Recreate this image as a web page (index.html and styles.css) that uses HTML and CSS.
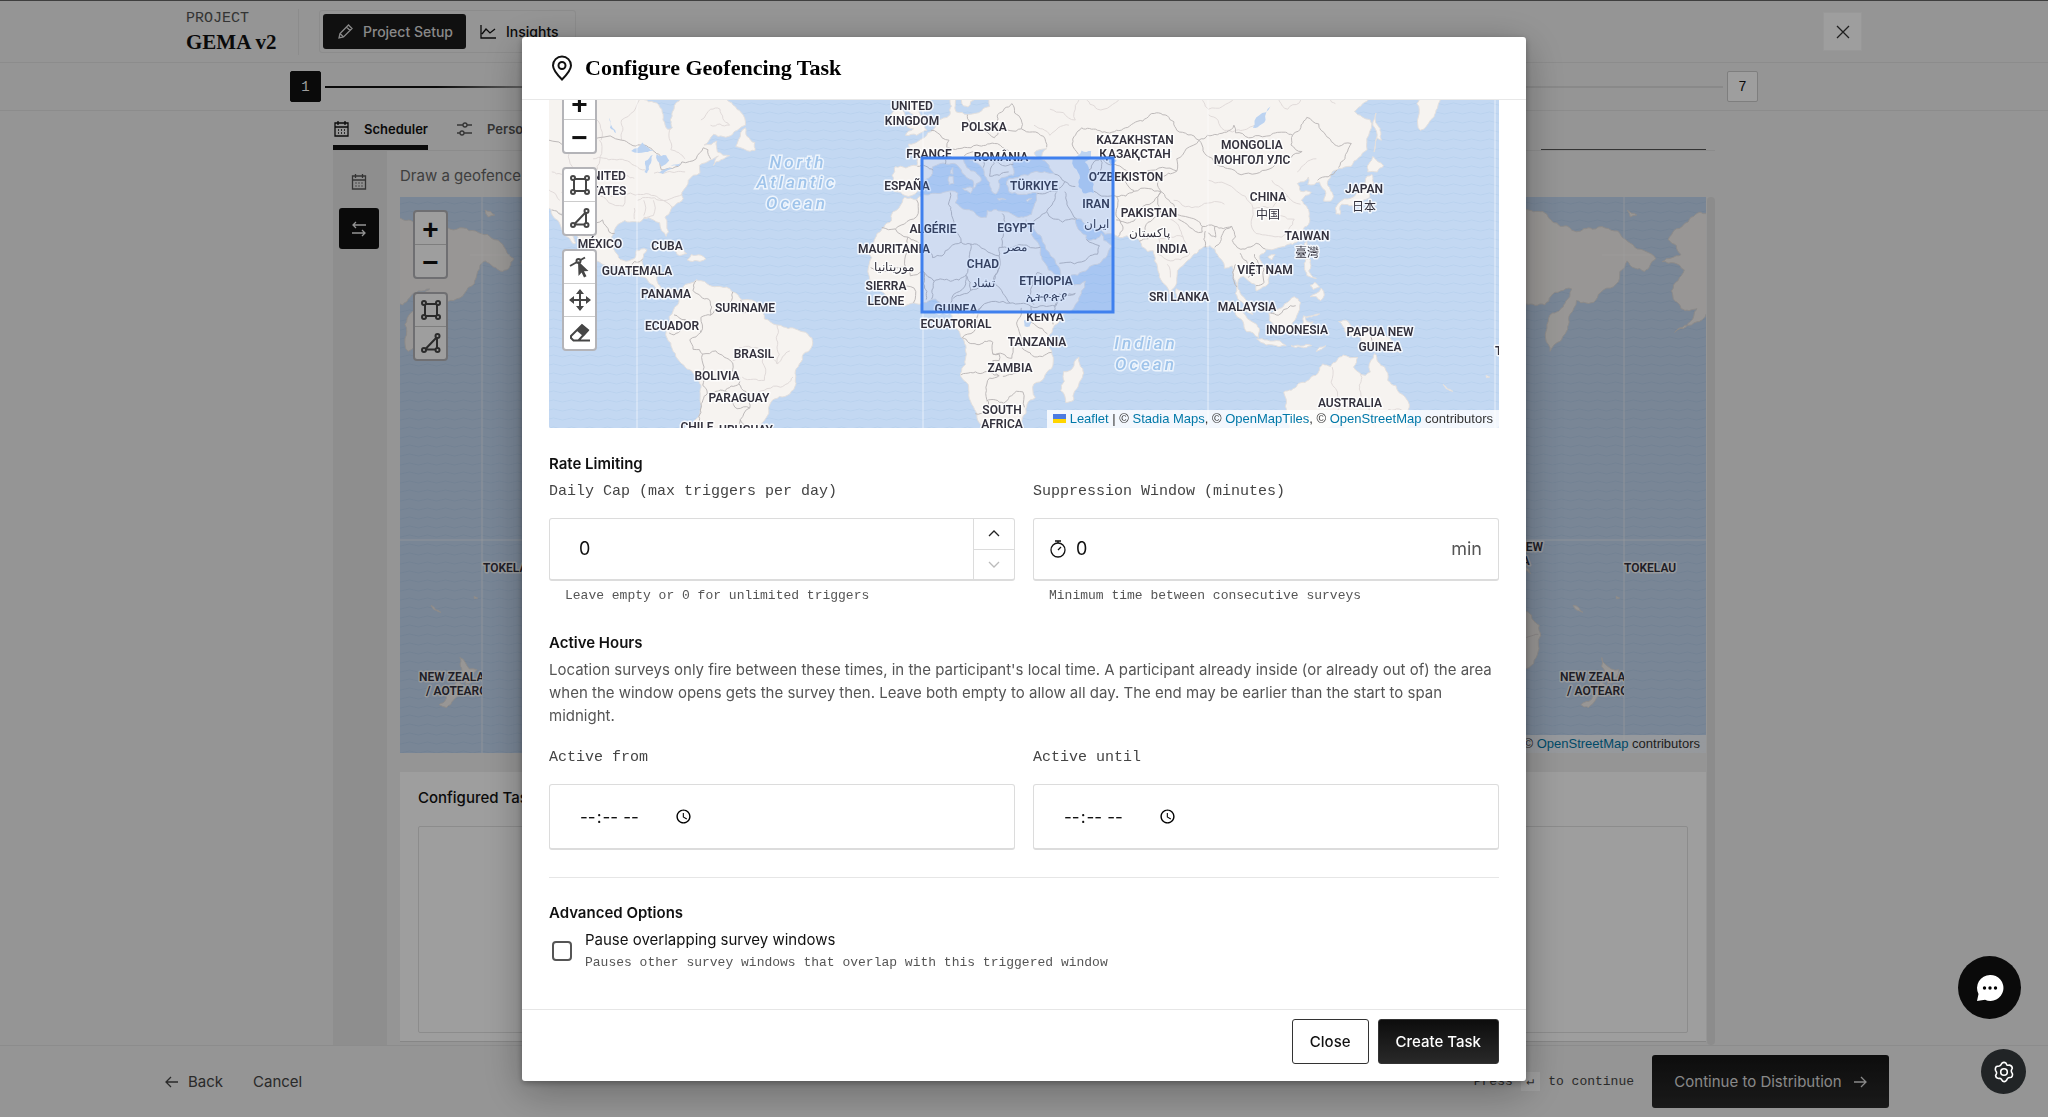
FILE: index.html
```html
<!DOCTYPE html>
<html lang="en">
<head>
<meta charset="utf-8">
<title>GEMA v2 – Project Setup</title>
<link rel="stylesheet" href="styles.css">
</head>
<body>
<div class="app">
  <header class="topbar">
    <div class="project">
      <span class="project-kicker">PROJECT</span>
      <span class="project-name">GEMA v2</span>
    </div>
    <nav class="switch">
      <button class="switch-item is-active" type="button">
        <svg class="icon" width="18" height="18" viewBox="0 0 18 18"><path d="M3 15l1-4.500L12.500 2l3.500 3.500L7.500 14zM10.500 4l3.500 3.500M4 10.500l3.500 3.500"/></svg>
        Project Setup
      </button>
      <button class="switch-item" type="button">
        <svg class="icon" width="18" height="18" viewBox="0 0 18 18"><path d="M2 2v13h15M3 11l4-5 4 4 5-4"/></svg>
        Insights
      </button>
    </nav>
    <button class="icon-button" type="button" aria-label="Exit"><svg class="icon" width="14" height="14" viewBox="0 0 14 14"><path d="M1 1l12 12M13 1L1 13"/></svg></button>
  </header>
  <div class="steps">
    <span class="step is-active">1</span>
    <span class="step-line"></span>
    <span class="step">7</span>
  </div>
  <main class="workspace">
    <nav class="tabs">
      <a class="tab is-active" href="#scheduler"><svg class="icon" width="17" height="18" viewBox="0 0 17 18"><path d="M2 3h13v13H2zM2 7h13M5 1v4M12 1v4M5 10h1M8 10h1M11 10h1M5 13h1M8 13h1M11 13h1"/></svg>Scheduler</a>
      <a class="tab" href="#personalize"><svg class="icon" width="17" height="18" viewBox="0 0 17 18"><path d="M1 5h6M11 5h5M1 13h3M8 13h8"/><circle cx="9" cy="5" r="2"/><circle cx="6" cy="13" r="2"/></svg>Personalization</a>
      <span class="tab-rule"></span>
    </nav>
    <div class="panes">
      <aside class="rail">
        <button class="rail-item" type="button" aria-label="Calendar"><svg class="icon" width="18" height="18" viewBox="0 0 17 18"><path d="M2 3h13v13H2zM2 7h13M5 1v4M12 1v4M5 10h1M8 10h1M11 10h1M5 13h1M8 13h1M11 13h1"/></svg></button>
        <button class="rail-item is-active" type="button" aria-label="Triggers"><svg class="icon" width="16" height="16" viewBox="0 0 16 16"><path d="M15 4H2M5 1L2 4l3 3M1 12h13M11 9l3 3-3 3"/></svg></button>
      </aside>
      <section class="geofence">
        <p class="helper">Draw a geofence on the map</p>
        <div class="map map-page">
          <svg class="map-canvas" viewBox="400 197 1306 556" preserveAspectRatio="xMidYMid slice" data-lon0="1053" data-equator="540">
            <rect x="0" y="0" width="2400" height="1200" class="sea"/>
            <rect x="0" y="0" width="2400" height="1200" fill="url(#waves)"/>
            <g class="land-layer"></g>
            <path class="seam" d="M482 197V753M1624 197V753M400 540H1706M1602 255H1650M470 255H510"/>
            <g class="labels start">
              <text x="483" y="572">TOKELAU</text><text x="1624" y="572">TOKELAU</text>
              <svg x="400" y="660" width="82" height="50" viewBox="0 0 82 50"><text x="19" y="21">NEW ZEALAND</text><text x="26" y="35">/ AOTEAROA</text></svg>
              <svg x="1541" y="660" width="83" height="50" viewBox="0 0 83 50"><text x="19" y="21">NEW ZEALAND</text><text x="26" y="35">/ AOTEAROA</text></svg>
              <text x="1476" y="551">PAPUA NEW</text><text x="1487" y="565">GUINEA</text>
            </g>
          </svg>
          <div class="map-tools">
            <div class="tool-group">
              <button type="button" class="tool zoom">+</button>
              <button type="button" class="tool zoom">−</button>
            </div>
            <div class="tool-group">
              <button type="button" class="tool" aria-label="Draw rectangle"><svg width="22" height="22"><use href="#i-rect"/></svg></button>
              <button type="button" class="tool" aria-label="Draw polygon"><svg width="22" height="22"><use href="#i-poly"/></svg></button>
            </div>
          </div>
          <p class="attribution">© <a href="#osm">OpenStreetMap</a> contributors</p>
        </div>
        <div class="configured">
          <h2>Configured Tasks</h2>
          <div class="configured-list"></div>
        </div>
      </section>
      <div class="scroll-track"></div>
    </div>
  </main>
  <footer class="bottombar">
    <button class="plain" type="button"><svg class="icon" width="14" height="14" viewBox="0 0 14 14"><path d="M13 7H1M6 2L1 7l5 5"/></svg>Back</button>
    <button class="plain" type="button">Cancel</button>
    <p class="press">Press <kbd>↵</kbd> to continue</p>
    <button class="continue" type="button">Continue to Distribution<svg class="icon" width="14" height="14" viewBox="0 0 14 14"><path d="M1 7h12M8 2l5 5-5 5"/></svg></button>
  </footer>
</div>

<div class="overlay">
  <div class="modal" role="dialog" aria-labelledby="modal-title">
    <div class="modal-head">
      <svg class="pin" width="24" height="26" viewBox="0 0 24 26"><path d="M12 24.500C7 19.500 3 15 3 10.500a9 9 0 0 1 18 0C21 15 17 19.500 12 24.500z"/><circle cx="12" cy="10.500" r="3.500"/></svg>
      <h1 id="modal-title">Configure Geofencing Task</h1>
    </div>
    <div class="modal-body">
      <div class="map map-modal">
        <svg class="map-canvas" viewBox="549 72 950 356" preserveAspectRatio="xMidYMid slice" data-lon0="923" data-equator="319">
          <defs>
            <pattern id="waves" width="36" height="9" patternUnits="userSpaceOnUse"><path class="wave" d="M0 5q4.500 2 9 0t9 0 9 0 9 0"/></pattern>
            <g id="i-rect" class="glyph"><path d="M5 5h12v12H5z"/><circle cx="4" cy="4" r="2"/><circle cx="18" cy="4" r="2"/><circle cx="4" cy="18" r="2"/><circle cx="18" cy="18" r="2"/></g>
            <g id="i-poly" class="glyph"><path d="M5 17.500L17 5v12.500z"/><circle cx="17.500" cy="4" r="2"/><circle cx="4" cy="18" r="2"/><circle cx="17.500" cy="18" r="2"/></g>
            <g id="i-edit" class="glyph"><path d="M1 10L16 1.500"/><circle cx="9.500" cy="5" r="2"/><path class="solid" d="M9 5l10.500 10-4.500.300 2.500 5-2.500 1.200-2.400-5L9.500 20z"/></g>
            <g id="i-move" class="glyph"><path d="M11 3v16M3 11h16"/><path class="solid" d="M11 0l4 5H7zM11 22l4-5H7zM0 11l5-4v8zM22 11l-5-4v8z"/></g>
            <g id="i-erase" class="glyph"><path d="M2 14L13 3l6 5-9.500 10.500h-5L2 16zM9 18.500h12"/><path class="solid" d="M13 2.500l7 6-5.500 6-7-6z"/></g>
          </defs>
          <rect x="0" y="0" width="2400" height="1200" class="sea"/>
          <rect x="0" y="0" width="2400" height="1200" fill="url(#waves)"/>
          <g class="land-layer"></g>
          <path class="seam" d="M637 72V428M923 72V428M1208 72V428M1495 72V428"/>
          <g class="ocean">
            <text x="798" y="168">North</text><text x="797" y="188">Atlantic</text><text x="797" y="209">Ocean</text>
            <text x="1146" y="349">Indian</text><text x="1146" y="370">Ocean</text>
          </g>
          <g class="labels">
            <text x="605" y="180">UNITED</text><text x="605" y="195">STATES</text>
            <text x="600" y="248">MÉXICO</text><text x="667" y="250">CUBA</text><text x="637" y="275">GUATEMALA</text><text x="666" y="298">PANAMA</text>
            <text x="745" y="312">SURINAME</text><text x="672" y="330">ECUADOR</text><text x="754" y="358">BRASIL</text><text x="717" y="380">BOLIVIA</text><text x="739" y="402">PARAGUAY</text><text x="697" y="431">CHILE</text><text x="746" y="434">URUGUAY</text>
            <text x="912" y="110">UNITED</text><text x="912" y="125">KINGDOM</text><text x="984" y="131">POLSKA</text><text x="929" y="158">FRANCE</text><text x="1001" y="161">ROMÂNIA</text><text x="907" y="190">ESPAÑA</text><text x="1034" y="190">TÜRKIYE</text>
            <text x="933" y="233">ALGÉRIE</text><text x="1016" y="232">EGYPT</text><text class="local" x="1015" y="251">مصر</text><text x="894" y="253">MAURITANIA</text><text class="local" x="894" y="271">موريتانيا</text><text x="983" y="268">CHAD</text><text class="local" x="983" y="287">تشاد</text>
            <text x="886" y="290">SIERRA</text><text x="886" y="305">LEONE</text><text x="956" y="313">GUINEA</text><text x="956" y="328">ECUATORIAL</text><text x="1046" y="285">ETHIOPIA</text><text class="local" x="1046" y="301">ኢትዮጵያ</text><text x="1045" y="321">KENYA</text><text x="1037" y="346">TANZANIA</text><text x="1010" y="372">ZAMBIA</text><text x="1002" y="414">SOUTH</text><text x="1002" y="428">AFRICA</text>
            <text x="1135" y="144">KAZAKHSTAN</text><text x="1135" y="158">ҚАЗАҚСТАН</text><text x="1126" y="181">OʻZBEKISTON</text><text x="1096" y="208">IRAN</text><text class="local" x="1096" y="228">ایران</text><text x="1149" y="217">PAKISTAN</text><text class="local" x="1149" y="237">پاکستان</text><text x="1172" y="253">INDIA</text>
            <text x="1252" y="149">MONGOLIA</text><text x="1252" y="164">МОНГОЛ УЛС</text><text x="1268" y="201">CHINA</text><text class="local" x="1268" y="219">中国</text><text x="1364" y="193">JAPAN</text><text class="local" x="1364" y="211">日本</text><text x="1307" y="240">TAIWAN</text><text class="local" x="1307" y="257">臺灣</text>
            <text x="1265" y="274">VIỆT NAM</text><text x="1179" y="301">SRI LANKA</text><text x="1247" y="311">MALAYSIA</text><text x="1297" y="334">INDONESIA</text><text x="1380" y="336">PAPUA NEW</text><text x="1380" y="351">GUINEA</text><text x="1350" y="407">AUSTRALIA</text><text x="1521" y="355">TOKELAU</text>
          </g>
          <rect class="fence" x="922" y="158" width="191" height="154"/>
        </svg>
        <div class="map-tools">
          <div class="tool-group">
            <button type="button" class="tool zoom">+</button>
            <button type="button" class="tool zoom">−</button>
          </div>
          <div class="tool-group">
            <button type="button" class="tool" aria-label="Draw rectangle"><svg width="22" height="22"><use href="#i-rect"/></svg></button>
            <button type="button" class="tool" aria-label="Draw polygon"><svg width="22" height="22"><use href="#i-poly"/></svg></button>
          </div>
          <div class="tool-group">
            <button type="button" class="tool" aria-label="Edit layers"><svg width="22" height="22"><use href="#i-edit"/></svg></button>
            <button type="button" class="tool" aria-label="Drag layers"><svg width="22" height="22"><use href="#i-move"/></svg></button>
            <button type="button" class="tool" aria-label="Remove layers"><svg width="22" height="22"><use href="#i-erase"/></svg></button>
          </div>
        </div>
        <p class="attribution"><svg class="flag" width="13" height="9" viewBox="0 0 13 9"><path fill="#4c7be1" d="M0 0h13v5H0z"/><path fill="#ffd500" d="M0 5h13v4H0z"/></svg> <a href="#leaflet">Leaflet</a> | © <a href="#stadia">Stadia Maps</a>, © <a href="#omt">OpenMapTiles</a>, © <a href="#osm">OpenStreetMap</a> contributors</p>
      </div>

      <h2 class="section-title">Rate Limiting</h2>
      <div class="columns">
        <div class="field">
          <label for="cap">Daily Cap (max triggers per day)</label>
          <div class="control">
            <input id="cap" class="number indented" type="number" value="0">
            <div class="stepper">
              <button type="button" aria-label="Increase"><svg class="icon" width="12" height="7" viewBox="0 0 12 7"><path d="M1 6l5-5 5 5"/></svg></button>
              <button type="button" aria-label="Decrease" disabled><svg class="icon" width="12" height="7" viewBox="0 0 12 7"><path d="M1 1l5 5 5-5"/></svg></button>
            </div>
          </div>
          <p class="hint">Leave empty or 0 for unlimited triggers</p>
        </div>
        <div class="field">
          <label for="window">Suppression Window (minutes)</label>
          <div class="control">
            <svg class="icon stopwatch" width="18" height="18" viewBox="0 0 18 18"><circle cx="9" cy="10" r="7"/><path d="M6 1h6M9 10l3-3M9 1v2"/></svg>
            <input id="window" class="number" type="number" value="0">
            <span class="unit">min</span>
          </div>
          <p class="hint">Minimum time between consecutive surveys</p>
        </div>
      </div>

      <h2 class="section-title spaced">Active Hours</h2>
      <p class="description">Location surveys only fire between these times, in the participant's local time. A participant already inside (or already out of) the area when the window opens gets the survey then. Leave both empty to allow all day. The end may be earlier than the start to span midnight.</p>
      <div class="columns hours">
        <div class="field">
          <label for="from">Active from</label>
          <div class="control tall"><input id="from" class="time" type="time"></div>
        </div>
        <div class="field">
          <label for="until">Active until</label>
          <div class="control tall"><input id="until" class="time" type="time"></div>
        </div>
      </div>

      <div class="advanced">
        <h2 class="section-title">Advanced Options</h2>
        <div class="check-row">
          <input id="pause" type="checkbox">
          <div>
            <label for="pause">Pause overlapping survey windows</label>
            <p class="hint">Pauses other survey windows that overlap with this triggered window</p>
          </div>
        </div>
      </div>
    </div>
    <div class="modal-foot">
      <button class="button" type="button">Close</button>
      <button class="button primary" type="button">Create Task</button>
    </div>
  </div>
</div>

<button class="chat" type="button" aria-label="Open chat"><svg width="28" height="28" viewBox="0 0 28 28"><path fill="#fff" d="M14 1a13 13 0 1 1-5 24.800L1 27l1.500-7A13 13 0 0 1 14 1z"/><circle cx="8.500" cy="14" r="1.700"/><circle cx="14" cy="14" r="1.700"/><circle cx="19.500" cy="14" r="1.700"/></svg></button>
<button class="gear" type="button" aria-label="Settings"><svg width="22" height="22" viewBox="0 0 22 22"><path d="M9 2.200Q11 .6 13 2.200L13.900 4Q14.800 4.500 16.500 4.100Q19 4.500 19.300 7.200L18.400 9.300Q18 11 19.300 12.500Q20 14.800 18.300 16.300L15.500 16.800Q14.300 17.200 13.700 19Q12 21.500 9.500 20L8.200 18Q7.300 17.200 5.500 17.500Q3 17.200 2.600 14.700L3.500 12.500Q3.900 11 2.600 9.500Q1.800 7.200 3.500 5.400L6.300 5Q7.800 4.600 9 2.200z"/><circle cx="11" cy="11" r="3.300"/></svg></button>
<script src="map.js"></script>
</body>
</html>
```
FILE: styles.css
```css
* { box-sizing: border-box; }
body { margin: 0; font-family: Inter, "Liberation Sans", sans-serif; font-size: 16px; line-height: 20px; color: #111; background: #f0f0f0; }
button { font: inherit; color: inherit; border: 0; padding: 0; background: none; display: flex; align-items: center; justify-content: center; }
a { color: inherit; text-decoration: none; }
p, h1, h2 { margin: 0; }
.icon { fill: none; stroke: currentColor; stroke-width: 1.300; flex: none; }

/* page behind the dialog */
.app { height: 100vh; display: flex; flex-direction: column; overflow: hidden; border-top: 1px solid #666; }
.topbar { height: 62px; padding: 0 186px; display: flex; align-items: center; border-bottom: 1px solid #e2e2e2; flex: none; }
.project { display: flex; flex-direction: column; gap: 2px; width: 113px; height: 46px; border-right: 1px solid #e2e2e2; justify-content: center; }
.project-kicker { font: 15px/18px "Liberation Mono", monospace; color: #555; }
.project-name { font: bold 21px/24px "Liberation Serif", serif; white-space: nowrap; }
.switch { display: flex; margin-left: 20px; padding: 3px; border: 1px solid #e2e2e2; border-radius: 3px; font-size: 14px; }
.switch-item { height: 35px; padding: 0 13px; gap: 9px; border-radius: 3px; font-weight: 500; white-space: nowrap; }
.switch-item.is-active { background: #1a1a1a; color: #ddd; }
.icon-button { margin-left: auto; width: 39px; height: 39px; background: #fff; border: 1px solid #f6f6f6; color: #333; }
.steps { height: 48px; padding: 0 290px; display: flex; align-items: center; gap: 4px; border-bottom: 1px solid #e2e2e2; flex: none; font: 14px/20px "Liberation Mono", monospace; }
.step { width: 31px; height: 31px; display: flex; align-items: center; justify-content: center; background: #fff; border: 1px solid #ccc; border-radius: 2px; }
.step.is-active { background: #111; color: #fff; border-color: #111; }
.step-line { flex: 1; height: 2px; background: linear-gradient(90deg, #111 8%, #ddd 17%); }
.workspace { flex: 1; min-height: 0; width: 100%; max-width: 1382px; margin: 0 auto; display: flex; flex-direction: column; }
.tabs { height: 40px; display: flex; gap: 28px; border-bottom: 1px solid #e2e2e2; flex: none; font-size: 13px; font-weight: 600; }
.tab { display: flex; align-items: center; gap: 14px; color: #555; border-bottom: 5px solid transparent; padding-top: 2px; }
.tab.is-active { color: #111; border-bottom-color: #111; border-radius: 4px 4px 0 0; }
.tab-rule { margin-left: auto; align-self: flex-end; width: 165px; height: 1px; margin-right: 9px; background: #555; }
.panes { flex: 1; min-height: 0; display: flex; overflow: hidden; }
.rail { width: 54px; flex: none; background: #e5e5e5; padding: 10px 8px 0 6px; display: flex; flex-direction: column; gap: 6px; }
.rail-item { width: 40px; height: 41px; border-radius: 3px; color: #555; }
.rail-item.is-active { background: #111; color: #eee; }
.geofence { flex: 1; min-width: 0; margin-left: 13px; display: flex; flex-direction: column; }
.helper { padding: 15px 0 11px; font-size: 15px; color: #666; }
.configured { margin-top: 19px; background: #fff; padding: 16px 18px; height: 270px; border-bottom: 1px solid #d8d8d8; }
.configured h2 { font-size: 15px; line-height: 20px; font-weight: 500; }
.configured-list { margin-top: 18px; height: 207px; border: 1px solid #e2e2e2; border-radius: 2px; }
.scroll-track { width: 9px; margin-top: 46px; border-left: 1px solid #f0f0f0; background: #e3e3e3; border-radius: 4px; }
.bottombar { height: 72px; flex: none; padding: 0 159px 0 165px; display: flex; align-items: center; gap: 30px; border-top: 1px solid #e2e2e2; color: #444; font-size: 15px; }
.plain { gap: 9px; }
.press { margin-left: auto; font: 13px/22px "Liberation Mono", monospace; }
.press kbd { font: inherit; background: #fff; padding: 2px 6px; }
.continue { margin-left: -12px; height: 53px; width: 237px; flex: none; gap: 11px; background: linear-gradient(#161616, #2a2a2a); color: #ddd; border-radius: 3px; }

/* maps */
.map { position: relative; flex: none; overflow: hidden; background: #c3d7f2; }
.map-page { height: 556px; }
.map-modal { height: 356px; border-radius: 2px; }
.map-canvas { position: absolute; inset: 0; width: 100%; height: 100%; display: block; }
.sea { fill: #c3d8f2; }
.wave { fill: none; stroke: #b2cbe9; stroke-width: 1; opacity: .5; }
.land { fill: #f6f3f0; stroke: #e3dfdd; stroke-width: 1; stroke-linejoin: round; }
.lake { fill: #bcd3f1; }
.border { fill: none; stroke: #bdb9b9; stroke-width: 1; stroke-linejoin: round; }
.region { fill: none; stroke: #e0dad9; stroke-width: 1; }
.seam { fill: none; stroke: #fff; opacity: .6; stroke-width: 1; }
.labels { font: 600 12px Roboto, "Noto Sans", "Noto Sans CJK SC", sans-serif; text-anchor: middle; fill: #33313d; stroke: #fff; stroke-opacity: .8; stroke-width: 3px; paint-order: stroke; stroke-linejoin: round; }
.labels.start { text-anchor: start; }
.labels .local { font-weight: 400; }
.ocean { font: italic 500 17px Roboto, sans-serif; letter-spacing: 3px; text-anchor: middle; fill: #9ec3ea; stroke: #edf4fc; stroke-width: 3px; paint-order: stroke; }
.fence { fill: #3b82f6; fill-opacity: .2; stroke: #3f80ee; stroke-width: 3; }
.map-tools { position: absolute; left: 13px; top: 13px; display: flex; flex-direction: column; gap: 13px; }
.tool-group { width: 35px; border: 2px solid #b4b4b8; border-radius: 4px; overflow: hidden; background: #fff; }
.tool { width: 31px; height: 33px; border-bottom: 1px solid #ccc; }
.tool:last-child { height: 32px; border-bottom: 0; }
.zoom { font: bold 28px/30px "Liberation Sans", sans-serif; padding-top: 4px; }
.glyph { fill: #fff; stroke: #464646; stroke-width: 2; }
.glyph .solid { fill: #464646; stroke: none; }
.attribution { position: absolute; right: 0; bottom: 0; padding: 0 6px; background: #fffc; font: 13px/18px "Liberation Sans", sans-serif; color: #333; white-space: nowrap; }
.attribution a { color: #0078a8; }

/* dialog */
.overlay { position: fixed; inset: 0; padding: 37px 0 36px; background: rgba(0, 0, 0, .38); display: flex; justify-content: center; }
.modal { width: 100%; max-width: 1004px; height: 100%; background: #fff; border-radius: 3px; box-shadow: 0 10px 40px rgba(0, 0, 0, .3), 0 2px 6px rgba(0, 0, 0, .3); display: flex; flex-direction: column; overflow: hidden; }
.modal-head { flex: none; height: 63px; padding: 0 28px; display: flex; align-items: center; gap: 11px; border-bottom: 1px solid #e8e8e8; }
.modal-head h1 { font: bold 22px/26px "Liberation Serif", serif; color: #000; }
.pin { fill: none; stroke: #111; stroke-width: 2; }
.modal-body { flex: 1; min-height: 0; overflow: hidden; padding: 0 27px 38px; display: flex; flex-direction: column; justify-content: flex-end; }
.modal-body > * { flex: none; }
.section-title { font-size: 15px; line-height: 20px; font-weight: 600; margin-top: 26px; }
.section-title.spaced { margin-top: 29px; }
.columns { margin-top: 8px; display: grid; grid-template-columns: 1fr 1fr; gap: 18px; }
.hours { margin-top: 21px; }
.field { display: flex; flex-direction: column; }
.field label { font: 15px/20px "Liberation Mono", monospace; color: #444; }
.control { margin-top: 16px; height: 63px; display: flex; align-items: center; border: 1px solid #dcdcdc; border-bottom-width: 2px; border-radius: 3px; background: #fff; }
.control.tall { height: 66px; padding-left: 29px; }
.control input { font: 18px/24px Inter, sans-serif; color: #111; border: 0; background: none; outline: 0; padding: 0; }
.number { flex: 1; min-width: 0; appearance: textfield; }
.number::-webkit-inner-spin-button { appearance: none; }
.control .indented { padding-left: 29px; }
.time { width: 117px; }
.control .time { font-size: 17px; }
.stepper { width: 41px; align-self: stretch; display: flex; flex-direction: column; border-left: 1px solid #dcdcdc; }
.stepper button { flex: 1; color: #222; }
.stepper button:first-child { border-bottom: 1px solid #dcdcdc; }
.stepper button:disabled { color: #bbb; }
.stopwatch { margin: 0 9px 0 15px; color: #111; }
.unit { font-size: 18px; color: #555; padding-right: 16px; }
.hint { font: 13px/16px "Liberation Mono", monospace; color: #555; }
.field .hint { margin: 7px 0 0 16px; }
.description { margin-top: 5px; font-size: 15px; line-height: 23px; color: #555; }
.advanced { margin-top: 27px; border-top: 1px solid #e6e6e6; padding-top: 25px; }
.advanced .section-title { margin: 0; }
.check-row { margin-top: 7px; display: flex; align-items: center; gap: 13px; }
.check-row input { appearance: none; width: 20px; height: 20px; margin: 0 0 0 3px; border: 2px solid #555; border-radius: 4px; }
.check-row label { font-size: 15px; line-height: 20px; display: block; }
.check-row .hint { margin-top: 5px; }
.modal-foot { flex: none; height: 72px; padding: 9px 27px 0; display: flex; justify-content: flex-end; gap: 9px; border-top: 1px solid #e6e6e6; }
.button { height: 45px; padding: 0 17px; border: 1px solid #333; border-radius: 3px; font-size: 15px; font-weight: 500; }
.primary { background: linear-gradient(#0d0d0d, #292929); color: #fff; }

.chat { position: fixed; right: 27px; bottom: 98px; width: 63px; height: 63px; border-radius: 50%; background: #0a0a0a; }
.gear { position: fixed; right: 22px; bottom: 23px; width: 45px; height: 45px; border-radius: 50%; background: #212426; }
.gear svg { fill: none; stroke: #fff; stroke-width: 1.600; }
```
FILE: map.js
```js
// Coastlines, lakes and borders as "lon,lat" lists, drawn in Web Mercator.
const WORLD = 1142;
const land = [
  "-141,70 -156,71.3 -166,68.3 -162,66.5 -168,65.6 -161,64.5 -165,61.5 -162,58.7 -157,58.7 -158,57.5 -164,54.6 -157,56.5 -151,60.5 -148,60 -140,59.8 -135,58 -130,54 -127,50.5 -124,48.5 -124.4,42.5 -123.8,39 -122,36.8 -120.6,34.5 -117.2,32.6 -115.8,30 -114,27.5 -112,25 -110,23 -109.5,23.3 -111,25.8 -112.8,29 -114.8,31.7 -112.5,30 -109.4,26.2 -105.6,22.5 -105.5,20.3 -103,18.1 -99,16.6 -95,16 -92.2,14.6 -88,13.1 -85.8,11 -83.7,8.6 -80.4,7.3 -79,9 -77.5,8 -77.3,4.5 -80,0.8 -81,-4 -79.5,-7.5 -76.2,-13.9 -71,-17.8 -70.2,-23 -71.5,-30 -73.5,-37 -74,-45 -69,-52 -65,-45 -62,-39 -57,-37.5 -57,-36.2 -58.4,-34 -55,-34.9 -52,-33 -48.6,-28.5 -48,-25.5 -42,-23 -40,-20 -39,-14 -35.2,-9 -35,-6 -38,-4 -41,-2.8 -44,-2.5 -48,-1 -50,0 -51.5,4 -54,6 -57,6 -60,8.5 -62,10 -65,10.2 -68,11 -70,12 -71.5,12.3 -75,10.8 -77,8.6 -79.5,9.5 -82,9 -83.5,11 -83.3,15 -86,15.9 -88,15.8 -88.5,18.5 -87,21.3 -90.4,21 -91,18.7 -94.5,18.2 -96,19 -97.5,21.5 -97.3,27 -94,29.6 -91,29.3 -89.3,29.2 -88,30.3 -85,29.8 -83,29 -82.5,27 -81,25.2 -80.2,26.5 -81.3,30.5 -78,33.9 -75.6,35.5 -76,37 -74,40 -70.3,41.8 -70.5,43.5 -67,44.8 -64.5,45.6 -66,43.5 -61,45.7 -64.8,46.5 -65,48.8 -69,48 -66,50.2 -60,50.2 -56,52 -57.5,54.5 -61.5,56.5 -65,60 -70,61 -78,62.5 -77,58.5 -76.8,56.5 -79,54.5 -79,51.5 -80.5,51.2 -82,53 -82.3,55 -88,56.7 -93,58.8 -94.5,61 -90,64 -86,67 -95,68 -110,68 -125,70",
  "-59,47.7 -56,47 -53,46.8 -53,48.5 -55.5,49.8 -56,51.5 -57.5,50.5",
  "-85,21.9 -82,23.1 -77,21.7 -74.5,20.2 -77.5,19.9 -78.5,21.3 -82,22.5",
  "-74.3,18.3 -73,19.9 -70,19.7 -68.5,18.6 -71,18",
  "-5.5,50 1.2,51 0.5,53 -1.5,55 -2,57.5 -4,58.5 -6,57 -4.8,54.8 -3,54 -4.5,53 -5,51.7 -3,51.3",
  "-10,52 -6.3,52.2 -6,54.5 -8,55.2 -10,54",
  "8,71 30,71 42,67 60,69 73,72 100,76 140,72.5 150,71.5 160,69.8 170,69.5 178,69.3 190,66 186.5,64.3 181,65.7 177.5,62.5 171,60 165,60 163,57.8 162.5,56 160,53 156.7,51 155.7,56 157.5,58 163.5,61.8 160,61.5 155,59.3 149,59.5 142,59 136,54.6 141,53 140.5,50 140,47 135,43.3 131,42.8 127.5,39.7 129.4,36 128.5,34.8 126.3,34.8 126.8,37.5 125,39.6 121.3,39 121.5,40.8 118,39.2 119,37.3 122.4,37 119.3,35 121.8,31.5 121.5,28.5 118.5,24.5 114,22.3 110,21.3 108.2,21.5 106,19.5 107,17 109.2,13.5 109,11.3 106.5,9.5 105,8.8 105,10.5 102.5,12 101,13.3 100,13 99.3,9.5 101,7 103.4,4 104,1.4 102,2.3 100.4,5.5 98.5,8 98.5,12 97.5,16.5 95,15.8 94,18.5 92,21.5 90.5,22.5 87,21.3 85,19.6 82,16.6 80.2,15 80,11.5 79.3,10 77.5,8 76,11 74.5,14 73,18 72.6,21 70.8,20.8 69,22.2 67,24.8 61.5,25.1 57.3,25.8 56,27 52,27.7 50,30 48,30 48.5,28 50.2,26 51.5,25.5 51.6,24.2 54.5,24.3 56.2,26 57,24 59.8,22.4 57.7,19 55,17 52,15.6 45,12.8 43.3,13 42.6,16.5 39.2,21 37,25.5 34.8,28.2 35,29.5 34.2,27.8 32.5,29.9 34,26.7 37,21 37.5,18.5 39.5,15.3 43,12.3 43.5,11.3 51.2,11.9 51,10 48,4.5 41.5,-2 39,-6 40.6,-11 40.5,-15.5 35,-20 35.4,-24 32.8,-26 32.5,-28.5 28,-33 22,-34.2 18.5,-34 17,-29 14.5,-22.5 11.8,-17 13.7,-11 12.3,-6 9,-1 9.5,3.8 6,4.4 4,6.3 -2,4.8 -7.5,4.4 -11.5,7 -13.5,9.5 -16.8,12.5 -17.4,14.7 -16.2,19 -17,21 -14.5,26 -10,29.5 -9.5,32 -6.5,34.5 -5.8,35.8 -2,35.1 3,36.8 10,37.3 11,36.8 10.2,34.3 15.2,32.3 20,30.5 20.2,32.3 23,32.6 29,30.9 34.2,31.3 35.8,35 36,36.8 30.5,36.5 27.3,37 26.3,39 27,40.4 31,41.2 35,42 41.5,41.5 37,45 39,47.2 35,46.3 36.3,45.2 33.5,44.5 32.5,46 30.5,46.2 28,43.5 28.5,41.2 26,40.8 23.8,40 24,38 23,36.6 21.5,37.5 19.5,41 19.3,42 14,45 12.3,45.4 13.8,43 18.4,40 16.8,39.2 16,38 15.7,40 12.3,41.8 10.3,43.8 7.5,43.8 3,43.2 3,41.7 0,39.8 -0.5,38 -2.2,36.8 -5.5,36.2 -8.9,37.2 -9.3,39 -8.8,43.2 -2,43.4 -1.3,45.5 -4.5,48.2 -1.5,48.8 1.5,50.5 4.5,52.5 8.5,54 8.2,57 10.5,57.5 10.5,54.5 14,54 18.5,54.7 21,55.5 21.5,57.5 24,57.3 24,59 29,60 22.5,60 21.5,63 17.5,62 18.5,60 16.5,57 14.2,55.4 12.8,55.6 11,59 7,58 5,60 8,64",
  "12.5,38 15.6,38.2 15,36.8", "8.2,39 9.7,39.2 9.5,41 8.3,41", "8.7,41.6 9.5,41.5 9.4,43", "23.5,35.4 26.2,35.2 24,35", "32.5,35 34.3,35.5 33,34.7",
  "49.2,-12 50.4,-15.5 47.5,-24.8 45,-25.5 43.4,-22 44.4,-16.3 47,-15.5",
  "79.8,9.5 81.8,7.5 81,6.2 79.9,7",
  "95.3,5.6 98,4.5 104,-1 106,-3 105.8,-5.8 102,-4 98.5,1.5",
  "105.2,-6.3 108.5,-6.6 112.5,-6.9 114.5,-8.4 110,-8.1 106.5,-7.4",
  "109,1.8 111.5,2.7 114,4.8 117,7 119,5.2 117.8,1 116,-3.8 111,-3.2 109.2,-0.5",
  "119.5,-5.3 119,-2.5 120,1 125,1.6 120.5,0.5 121,-0.8 123,-0.9 121.5,-2 122.5,-5 120.8,-3",
  "131,-0.8 134,-0.8 135,-3.2 140,-2.3 145,-4.5 147.5,-6.3 150.5,-10.5 146,-8.7 143,-9.2 139,-8 137.8,-5.5 133,-4",
  "120.3,16 120.6,18.5 122.2,18.4 121.6,15 124,12.7 121,13.6", "122,7 125.5,9.7 126.5,7.5 125.4,5.8 124,7", "122,10.5 123.5,11.5 125,10 123,9.3",
  "120.1,23 121.5,25.2 121.9,25 120.9,22", "108.7,19.2 111,19.9 110,18.3",
  "130,33 131,34.3 135,35.6 137,37 139.5,38.5 140,41 141.5,41.4 142,39.5 140.8,35.7 137,34.6 135.5,33.6 132,34 131.5,31.3 130.2,31.4",
  "140.2,42 141.8,45.5 145.2,43.4 143.2,42", "142.2,46.5 143,49.5 144.5,49 143.3,52 142.8,54.3 141.8,52",
  "113.7,-22.5 114.2,-26.5 115.7,-32 115.2,-34.2 118,-35 124,-33.5 129,-31.6 134.5,-33 138,-35 141,-38.3 147,-38.5 150,-37.3 153,-31.5 153.3,-26 150.8,-23 146.5,-19 145.5,-15 143.5,-13.5 142.4,-10.8 141,-16.5 139.5,-17.5 135.7,-15 137,-12 132.5,-11.3 130.5,-13 128.5,-14.8 126,-14 122.3,-18 118,-20.3",
  "173,-34.7 176,-37.6 178.4,-37.8 176.5,-41 174.8,-41.3 174,-39", "172.7,-40.6 174.2,-41.7 171,-45 168.8,-46.6 166.5,-46",
  "144.8,-40.8 148,-40.9 147.5,-43.3 146,-43.5", "124,-10.2 127,-8.4 125,-8.9", "116,-8.4 119,-8.5 122.5,-8.4 119,-8.8", "181,71.5 184,71 182,70.8",
  "164,-20.2 167,-22.2 165,-21.5", "177.5,-17.5 178.6,-18 177.6,-18.2"
];
const lakes = [
  "-92,46.7 -88.5,48.5 -84.7,46.7 -87.5,46.5", "-87.8,42 -87.6,44.5 -85.2,45.9 -86.3,43.5 -87,41.7", "-84,46 -81,45.8 -80,44.6 -82.5,43.2 -83.7,44.5", "-83.2,41.8 -79,42.8 -82,41.5", "-79.6,43.4 -76.4,44 -77,43.3",
  "47.2,45 50,46.8 53,46.7 53,45 51,44.3 52.7,41.5 53.8,39 53.8,36.9 50.5,36.8 49,38.5 49.5,40.5 47.6,43",
  "58.5,45.5 61,46.5 61,44.5 59,43.8", "104,51.5 109.5,55.5 108,53 105.5,51.6", "74,45.2 78.5,46.6 75,46.4", "31.8,-0.5 34,0.3 33.6,-2.4 32,-2.3", "-99,53.5 -97,51 -96.8,50.4 -98.7,51.5", "-109,59 -110,59.2"
];
const borders = [
  "-124,49 -95,49 -89,48 -84.5,46.5 -82.5,45.3 -82.5,42.5 -79,42.8 -76,44.3 -71.5,45 -69.3,47.4 -67.8,47 -67,45",
  "-117,32.5 -111,31.3 -106.5,31.7 -103,29 -101,29.8 -99,26.5 -97.2,26",
  "-92.2,14.6 -91,17.8 -89.2,17.8 -88.5,18.5", "-77.8,7.5 -77.3,8.6",
  "-71.5,12 -72.5,9 -70,7 -67.5,6.2 -67,1.2 -70,0.5 -70,-4.2 -75,-0.2 -78.5,1.3", "-60,8.5 -61,5.2 -64,4 -67,1.2", "-80,-4.4 -78.5,-5 -75,-0.2", "-70,-4.2 -73.5,-6.5 -72.5,-9.5 -70.5,-9.6 -69.5,-11 -69,-15 -69.5,-17.6 -68,-22.8 -70,-27 -70,-36 -71.5,-44", "-69.5,-11 -65.3,-10 -60,-13.7 -60,-16.3 -57.8,-18 -58,-20 -62.5,-22.2 -68,-22.8", "-58,-20 -55.8,-22.3 -54.3,-24.2 -54.6,-27 -58.6,-27.2 -62.5,-22.2", "-54.6,-27 -57.6,-30.2 -58.4,-34", "-57.6,-30.2 -53.4,-33.7",
  "-57.5,6 -57,2 -52,2.3 -51.5,4", "-13,27.7 -8.7,27.3 -4.8,25 -5.5,16 -12,14.8 -16.5,16", "-8.7,27.3 -1.5,31.5 -2,35.1", "-4.8,25 3,19 6,19.5 12,23.5 10,27 9.5,30 8,34 8.6,37", "12,23.5 15,23 24,19.5 24,22 25,22 25,31.5", "25,22 37,22", "15,23 15.5,17 13.5,13.7 3.5,11.8 0,15 -4,13.5 -5.5,16", "24,19.5 24,15.8 22,11 15,9 13.5,13.7", "24,15.8 22.8,10.9 27.5,5 34,4 41.8,4 43,7.9 48,8 41.5,4 41,-1.7", "34,4 35,1 34,-1 37.6,-3 39.2,-4.7", "27.5,5 18.5,4 16,2 13,2.3 9.8,2.3", "18.5,4 16,-4 12.4,-5.9 17,-8 22,-7.3 22,-11 24,-11 24,-13 22,-13 22,-16 24,-17.6 12,-17.3", "22,-11 28,-12.3 28.5,-8.5 30.8,-8.3 29.5,-1.3 31,3.5", "30.8,-8.3 34.5,-11.5 40.5,-10.5", "24,-17.6 21,-18.3 20,-22 20,-28.5 16.5,-28.6", "20,-25 25.5,-25.7 29.4,-22.2 31.5,-22.4 32,-26.8", "25.2,-17.8 30.5,-15.6 33,-14", "0,15 0.2,11 1,6.1", "-8,10 -5,10.3 -2.8,9.7 -3,5.1", "2.7,6.3 3.5,11.8", "8.6,4.8 13.5,11 13.5,13.7", "9.5,6.5 15,9", "36,14.5 34,8.5 35,4.5", "36,14.5 42,12.7",
  "-1.8,43.3 3.2,42.4", "2.5,51 6,49.5 8.2,49 7.5,47.5 7,43.8", "7.5,47.5 13,47.5 17,48 22.5,48.3 29.5,46", "14,54 15,51 22.5,49.5 24,51 23.5,54 28,56 31,53 31,51.3 24,51.5", "31,51.3 38,49.8 39,47.5", "22,44.5 28.5,43.7", "20,46 22.5,44 21,41 27,42", "13,45.6 16.5,46.5 19,46 19,43",
  "36,36.8 42.3,37.2 44.7,39.7 41.5,41.5", "44.7,39.7 48,38.5", "44.7,37.2 46,33 48.5,30", "42,37 41,34.5 39,32 34.9,29.5", "39,32 44,29.2 48,30", "43,17.3 52,19 55,20 55.6,22.5 51.5,24.3", "53.9,37.3 61,36 60.8,31.5 63,27.2 61.6,25.2", "61,36 66.5,37.3 71,38 75,37.2 69.5,33.5 66.5,29.5 60.9,29.8", "75,37.2 74,34 75,32 70,27.8 71,24.5 68.2,23.8", "75,37.2 79,34 79,31 88,28 92,28 97.3,28 98.5,25 97.5,24 99,22 101.5,21.5 105,23.2 108,21.5", "80.5,30 88,26.4 88,28", "89,26.7 89,22", "92,28 92.3,25 89.8,26.2", "92,22 94.5,26 97.3,28", "98.5,17 98,12 99,10", "100,20.3 102,18 105.5,14.5 102.5,13", "104.5,20 107.5,15.5 107.5,11.5 105,10.5",
  "52,42 56,45 56,41.3 61,41.3 66.5,37.5", "56,45 61.2,43.5 67,41 71,42.3 80,42.2 80,45 83,47.2 87,49 80,51 77,53.8 71.5,54 61,51 55,51 50,51.5 47,48.2 49,46", "71,42.3 71,40 75,40.5 80,42.2", "75,37.2 74,39.5 75,40.5", "87,49 98,52 98.5,50.5 107,49.7 116.5,50 120,52.8 121,53.5 127,50 131,47.7 135,48.3 133,45 131,43", "87,49 91,45.2 96,42.8 105,41.6 112,45 119.5,46.6 116,48 116.5,50", "130.5,42.5 124.4,40", "109.5,2 112,1.2 115.8,4.2 117.5,4.2", "141,-2.6 141,-9.2"
];
const regions = [
  "129,-15 129,-31.6", "138,-17 138,-26 129,-26", "141,-26 141,-38", "138,-26 141,-26 141,-29 153,-28.5", "-111,49 -111,37 -102,37 -102,49", "-104,45 -91,43.5 -87.5,42.5", "-102,41 -96,41 -91,40.5", "-94.5,37 -94.5,33.5 -103,36.5", "-109,37 -109,31.5", "-114,37 -102,37 -89,36.5 -76,36.5", "-85,35 -85,31 -88,30.5", "-88,35 -88,31", "-117,42 -111,42", "-120,49 -119,42 -119,39 -114.5,35", "-84.8,41.7 -80.5,42 -75,42", "-91,33 -91,30", "-90,35 -83,35 -79,33", "-110,60 -110,49", "-102,60 -101.5,49", "-95,49 -95,53 -89,57", "-79.5,51.5 -79.5,47 -75,45", "-67,52 -61,52 -64,55 -67,55 -70,53", "-60,-13 -50,-10 -46,-14 -42,-10", "-46,-14 -46,-2", "-50,-10 -50,-19 -57,-18", "-53,-23 -45,-21 -41,-18", "-58,-9 -50,-10", "110,40 115,36 110,33 104,33 98,38 90,40", "95,34 79,35", "110,33 117,30 113,25 105,26 104,33", "115,36 119,34", "124,45 118,42", "74,25 82,25 84,20 78,18 74,20 74,25", "77,17 78,13", "78,30 82,25", "50,60 55,55 62,57 68,58 75,60", "85,60 90,55 98,57 105,60", "110,58 115,55 121,58 130,56", "40,55 48,53 50,58", "35,52 40,50 46,52", "90,54 95,51 105,52"
];
const SVG = "http://www.w3.org/2000/svg";
function project(pair, lon0, equator, turn) {
  const [lon, lat] = pair.split(",").map(Number);
  const m = Math.log(Math.tan(Math.PI / 4 + lat * Math.PI / 360));
  return [lon0 + (lon + turn) / 360 * WORLD, equator - m * WORLD / (2 * Math.PI)];
}
// Midpoint displacement gives the coasts and borders a natural, irregular edge.
function roughen(a, b, depth) {
  const dx = b[0] - a[0], dy = b[1] - a[1], len = Math.hypot(dx, dy);
  if (depth === 0 || len < 4) return [b];
  const s = Math.sin(Math.round(a[0] + b[0]) * 12.9 + Math.round(a[1] + b[1]) * 7.3) * .13;
  const mid = [(a[0] + b[0]) / 2 - dy * s, (a[1] + b[1]) / 2 + dx * s];
  return [...roughen(a, mid, depth - 1), ...roughen(mid, b, depth - 1)];
}
function toPath(line, lon0, equator, turn, closed, rough) {
  const pts = line.split(" ").map(p => project(p, lon0, equator, turn));
  if (closed) pts.push(pts[0]);
  const out = [pts[0]];
  for (let i = 1; i < pts.length; i++) out.push(...(rough ? roughen(pts[i - 1], pts[i], 4) : [pts[i]]));
  return "M" + out.map(p => Math.round(p[0] * 10) / 10 + " " + Math.round(p[1] * 10) / 10).join("L") + (closed ? "Z" : "");
}
document.querySelectorAll("[data-lon0]").forEach(svg => {
  const lon0 = +svg.dataset.lon0, equator = +svg.dataset.equator;
  const layer = svg.querySelector(".land-layer");
  [["land", land, true, true], ["region", regions, false, true], ["border", borders, false, true], ["lake", lakes, true, true]].forEach(([name, lines, closed, rough]) => {
    const path = document.createElementNS(SVG, "path");
    path.setAttribute("class", name);
    path.setAttribute("d", [-360, 0, 360].flatMap(t => lines.map(l => toPath(l, lon0, equator, t, closed, rough))).join(""));
    layer.append(path);
  });
});
```
